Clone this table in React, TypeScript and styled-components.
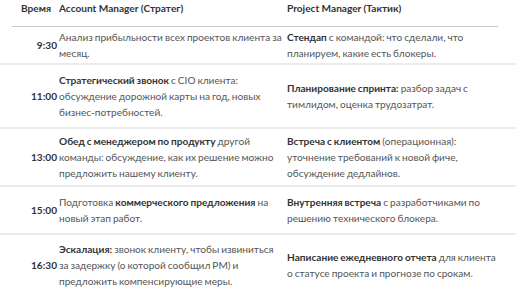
import React from 'react';
import styled, { createGlobalStyle } from 'styled-components';

const GlobalStyle = createGlobalStyle`
  html, body {
    margin: 0;
    padding: 0;
    background: #fff;
  }
  body {
    font-family: Lato, 'Noto Sans', sans-serif;
    font-size: 10.1px;
    color: #555;
  }
`;

type Row = {
  time: string;
  pad: number;
  am: React.ReactNode;
  pm: React.ReactNode;
};

const rows: Row[] = [
  {
    time: '9:30',
    pad: 2,
    am: <>Анализ прибыльности всех проектов клиента за месяц.</>,
    pm: (
      <>
        <b>Стендап</b> с командой: что сделали, что планируем, какие есть блокеры.
      </>
    ),
  },
  {
    time: '11:00',
    pad: 7,
    am: (
      <>
        <b>Стратегический звонок</b> с CIO клиента: обсуждение дорожной карты на год, новых
        бизнес-потребностей.
      </>
    ),
    pm: (
      <>
        <b>Планирование спринта:</b> разбор задач с тимлидом, оценка трудозатрат.
      </>
    ),
  },
  {
    time: '13:00',
    pad: 4,
    am: (
      <>
        <b>Обед с менеджером по продукту</b> другой команды: обсуждение, как их решение можно
        предложить нашему клиенту.
      </>
    ),
    pm: (
      <>
        <b>Встреча с клиентом</b> (операционная): уточнение требований к новой фиче, обсуждение
        дедлайнов.
      </>
    ),
  },
  {
    time: '15:00',
    pad: 7,
    am: (
      <>
        Подготовка <b>коммерческого предложения</b> на новый этап работ.
      </>
    ),
    pm: (
      <>
        <b>Внутренняя встреча</b> с разработчиками по решению технического блокера.
      </>
    ),
  },
  {
    time: '16:30',
    pad: 6,
    am: (
      <>
        <b>Эскалация:</b> звонок клиенту, чтобы извиниться за задержку (о которой сообщил PM) и
        предложить компенсирующие меры.
      </>
    ),
    pm: (
      <>
        <b>Написание ежедневного отчета</b> для клиента о статусе проекта и прогнозе по срокам.
      </>
    ),
  },
];

export default function App() {
  return (
    <>
      <GlobalStyle />
      <Table>
        <Header>
          <HeadTime>Время</HeadTime>
          <HeadCell>Account Manager (Стратег)</HeadCell>
          <HeadCell>Project Manager (Тактик)</HeadCell>
        </Header>
        {rows.map((r) => (
          <BodyRow key={r.time} pad={r.pad}>
            <Time>{r.time}</Time>
            <Cell>{r.am}</Cell>
            <Cell>{r.pm}</Cell>
          </BodyRow>
        ))}
      </Table>
    </>
  );
}

const Table = styled.div`
  width: 516px;
  display: flex;
  flex-direction: column;
  line-height: 16px;
`;

const Header = styled.div`
  display: grid;
  grid-template-columns: 45px 226px 209px;
  column-gap: 2px;
  margin: 0 18px 0 12px;
  padding: 0 0 10px;
  border-bottom: 1px solid #c8c8c8;
`;

const HeadTime = styled.div`
  font-weight: 700;
  color: #333;
  text-align: center;
  padding-left: 3px;
`;

const HeadCell = styled.div`
  font-weight: 700;
  color: #333;
`;

const BodyRow = styled.div<{ pad: number }>`
  display: grid;
  grid-template-columns: 45px 226px 215px;
  column-gap: 2px;
  align-items: center;
  padding: ${({ pad }) => pad}px 0 ${({ pad }) => pad}px 12px;
  border-bottom: 2px solid #ececec;
`;

const Time = styled.div`
  font-weight: 700;
  color: #333;
  text-align: right;
`;

const Cell = styled.div`
  word-spacing: -0.6px;

  b {
    font-weight: 700;
    color: #333;
  }
`;
